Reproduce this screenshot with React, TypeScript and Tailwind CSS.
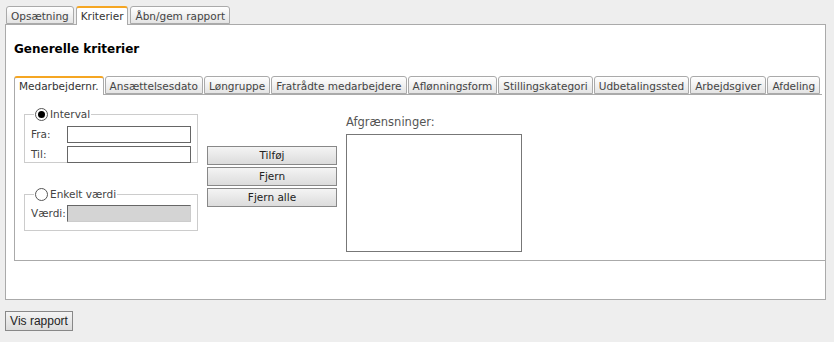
import React from "react";

const font = { fontFamily: '"DejaVu Sans", Verdana, sans-serif' };

function Tab({ label, active }: { label: string; active?: boolean }) {
  return (
    <div
      className={
        active
          ? "relative -mb-px h-[19px] whitespace-nowrap rounded-t-[3px] border border-b-0 border-[#aaaaaa] border-t-2 border-t-[#f5a623] bg-white px-[4px] pt-[1px] text-[10.5px] leading-[15px] text-[#333]"
          : "h-[18px] whitespace-nowrap rounded-t-[3px] border border-[#aaaaaa] bg-gradient-to-b from-white to-[#e4e4e4] px-[4px] pt-[2px] text-[10.5px] leading-[14px] text-[#444]"
      }
    >
      {label}
    </div>
  );
}

function Radio({ checked }: { checked?: boolean }) {
  return (
    <span className="flex h-[13px] w-[13px] items-center justify-center rounded-full border border-[#555] bg-white">
      {checked && <span className="h-[7px] w-[7px] rounded-full bg-black" />}
    </span>
  );
}

function Btn({ label }: { label: string }) {
  return (
    <div className="flex h-[19px] w-[130px] items-center justify-center whitespace-nowrap border border-[#888] bg-gradient-to-b from-[#f4f4f4] to-[#dcdcdc] text-[10.5px] text-[#222]">
      {label}
    </div>
  );
}

export default function App() {
  const inner = [
    "Medarbejdernr.",
    "Ansættelsesdato",
    "Løngruppe",
    "Fratrådte medarbejdere",
    "Aflønningsform",
    "Stillingskategori",
    "Udbetalingssted",
    "Arbejdsgiver",
    "Afdeling",
  ];
  return (
    <div style={font} className="h-[342px] w-[834px] bg-[#eeeeee] pl-[5px] pt-[6px]">
      <div className="flex gap-[2px] pl-[1px]">
        <Tab label="Opsætning" />
        <Tab label="Kriterier" active />
        <Tab label="Åbn/gem rapport" />
      </div>
      <div className="h-[276px] w-[821px] border border-[#aaaaaa] bg-white pl-[8px] pt-[17px]">
        <div className="text-[12px] font-bold leading-[15px] text-black">Generelle kriterier</div>
        <div className="mt-[19px] flex w-[808px] gap-[1px] border-b border-[#aaaaaa]">
          {inner.map((t, i) => (
            <Tab key={t} label={t} active={i === 0} />
          ))}
        </div>
        <div className="flex h-[166px] w-[812px] border-b border-l border-[#aaaaaa] pl-[9px] pt-[12px]">
          <div className="flex w-[174px] flex-col">
            <fieldset className="h-[56px] border border-[#cccccc] px-[6px]">
              <legend className="ml-[3px] flex items-center gap-[2px] px-[1px] text-[10.5px] leading-[14px] text-[#444]">
                <Radio checked />
                <span>Interval</span>
              </legend>
              <div className="mt-[5px] flex items-center">
                <span className="w-[36px] text-[10.5px] text-[#444]">Fra:</span>
                <div className="h-[17px] w-[124px] border border-[#666] bg-white" />
              </div>
              <div className="mt-[3px] flex items-center">
                <span className="w-[36px] text-[10.5px] text-[#444]">Til:</span>
                <div className="h-[17px] w-[124px] border border-[#666] bg-white" />
              </div>
            </fieldset>
            <fieldset className="mt-[24px] h-[44px] border border-[#cccccc] pl-[6px]">
              <legend className="ml-[3px] flex items-center gap-[2px] px-[1px] text-[10.5px] leading-[14px] text-[#444]">
                <Radio />
                <span>Enkelt værdi</span>
              </legend>
              <div className="mt-[4px] flex items-center">
                <span className="w-[36px] whitespace-nowrap text-[10.5px] text-[#444]">Værdi:</span>
                <div className="h-[17px] w-[124px] border border-[#666] border-b-[#ccc] border-r-[#ccc] bg-[#d4d4d4]" />
              </div>
            </fieldset>
          </div>
          <div className="ml-[9px] mt-[39px] flex flex-col gap-[2px]">
            <Btn label="Tilføj" />
            <Btn label="Fjern" />
            <Btn label="Fjern alle" />
          </div>
          <div className="ml-[9px] mt-[8px] flex flex-col">
            <div className="text-[11.5px] leading-[14px] text-[#555]">Afgrænsninger:</div>
            <div className="mt-[5px] h-[118px] w-[176px] border border-[#777] bg-white" />
          </div>
        </div>
      </div>
      <div
        className="mt-[11px] flex h-[20px] w-[68px] items-center justify-center border border-[#888] bg-gradient-to-b from-[#f4f4f4] to-[#dcdcdc] text-[#222]"
        style={{ fontFamily: '"Liberation Sans", Arial, sans-serif', fontSize: 12 }}
      >
        Vis rapport
      </div>
    </div>
  );
}
